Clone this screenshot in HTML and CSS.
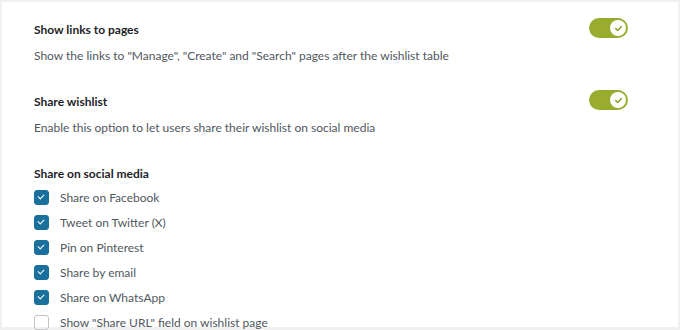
FILE: index.html
```html
<!DOCTYPE html>
<html lang="en">
<head>
    <meta charset="UTF-8">
    <title>Wishlist sharing options</title>
    <link rel="stylesheet" href="styles.css">
</head>
<body>
    <div class="panel">
        <div class="option">
            <div class="option-head">
                <h3>Show links to pages</h3>
                <span class="toggle on"><span class="knob"><svg viewBox="0 0 10 10" width="9" height="9"><path d="M2 5.2 L4.1 7.2 L8 3" fill="none" stroke="#8fa12a" stroke-width="1.8" stroke-linecap="round" stroke-linejoin="round"/></svg></span></span>
            </div>
            <p class="desc">Show the links to "Manage", "Create" and "Search" pages after the wishlist table</p>
        </div>

        <div class="option">
            <div class="option-head">
                <h3>Share wishlist</h3>
                <span class="toggle on"><span class="knob"><svg viewBox="0 0 10 10" width="9" height="9"><path d="M2 5.2 L4.1 7.2 L8 3" fill="none" stroke="#8fa12a" stroke-width="1.8" stroke-linecap="round" stroke-linejoin="round"/></svg></span></span>
            </div>
            <p class="desc">Enable this option to let users share their wishlist on social media</p>
        </div>

        <div class="option">
            <h3>Share on social media</h3>
            <ul class="checks">
                <li><span class="box checked"></span>Share on Facebook</li>
                <li><span class="box checked"></span>Tweet on Twitter (X)</li>
                <li><span class="box checked"></span>Pin on Pinterest</li>
                <li><span class="box checked"></span>Share by email</li>
                <li><span class="box checked"></span>Share on WhatsApp</li>
                <li><span class="box"></span>Show "Share URL" field on wishlist page</li>
            </ul>
        </div>
    </div>
</body>
</html>
```

FILE: styles.css
```css
html, body {
    height: 100%;
}

body {
    margin: 0;
    padding: 2px;
    box-sizing: border-box;
    background-color: #f0f0f1;
    font-family: Lato, 'Open Sans', sans-serif;
    font-size: 12px;
    color: #50575e;
    overflow: hidden;
}

.panel {
    background-color: white;
    height: 325px;
    width: 676px;
    padding: 18px 50px 0 32px;
    box-sizing: border-box;
}

.option {
    margin-bottom: 26px;
}

.option-head {
    display: flex;
    justify-content: space-between;
    align-items: center;
}

h3 {
    margin: 0;
    font-size: 12px;
    font-weight: 700;
    color: #1d2327;
    line-height: 20px;
}

.desc {
    margin: 6px 0 0;
    line-height: 20px;
}

.toggle {
    width: 39px;
    height: 20px;
    border-radius: 10px;
    background-color: #9aac2e;
    display: flex;
    align-items: center;
    justify-content: flex-end;
    padding: 2px;
    box-sizing: border-box;
    margin-top: -4px;
}

.knob {
    width: 16px;
    height: 16px;
    border-radius: 50%;
    background-color: white;
    display: flex;
    align-items: center;
    justify-content: center;
}

.checks {
    list-style: none;
    margin: 1px 0 0;
    padding: 0;
}

.checks li {
    display: flex;
    align-items: center;
    height: 25px;
}

.box {
    width: 15px;
    height: 15px;
    box-sizing: border-box;
    border: 1px solid #c3c4c7;
    border-radius: 3px;
    margin-right: 11px;
    position: relative;
}

.box.checked {
    background-color: #19709c;
    border-color: #19709c;
}

.box.checked::after {
    content: "";
    position: absolute;
    left: 3px;
    top: 3px;
    width: 5px;
    height: 3px;
    border-left: 1.6px solid white;
    border-bottom: 1.6px solid white;
    transform: rotate(-45deg);
}
```
